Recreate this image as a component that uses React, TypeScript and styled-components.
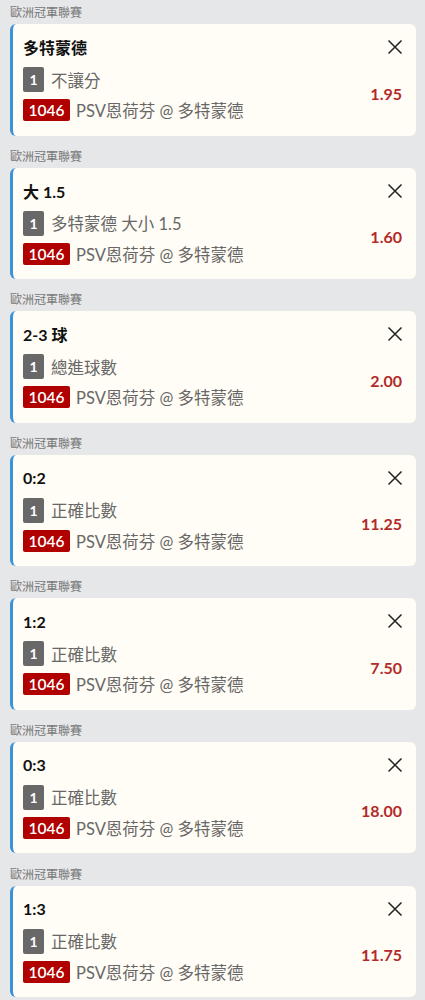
import React from "react";
import styled, { createGlobalStyle } from "styled-components";

const GlobalStyle = createGlobalStyle`
  html, body {
    margin: 0;
    padding: 0;
    background: #e6e7e9;
    font-family: Lato, "Noto Sans CJK TC", sans-serif;
  }
`;

const Page = styled.div`
  display: flex;
  flex-direction: column;
  padding: 0 9px 0 10px;
`;

const Section = styled.section`
  display: flex;
  flex-direction: column;
  height: 143.6px;
`;

const League = styled.div`
  height: 24px;
  display: flex;
  align-items: center;
  padding-bottom: 1px;
  box-sizing: border-box;
  font-size: 12px;
  color: #777;
  font-family: "Noto Sans CJK TC", sans-serif;
`;

const Card = styled.div`
  height: 111.5px;
  box-sizing: border-box;
  background: #fffdf5;
  border-left: 3px solid #3a92db;
  border-radius: 6px;
  padding: 13px 14px 0 10px;
  display: flex;
  flex-direction: column;
`;

const TitleRow = styled.div`
  display: flex;
  align-items: center;
  justify-content: space-between;
  height: 20px;
`;

const Title = styled.div`
  font-size: 16px;
  font-weight: 700;
  color: #111;
  font-family: Lato, "Noto Sans CJK TC", sans-serif;
`;

const CloseButton = styled.button`
  border: 0;
  background: none;
  padding: 0;
  margin-right: -1px;
  width: 16px;
  height: 16px;
  display: flex;
  align-items: center;
  justify-content: center;
  color: #222;
`;

const Body = styled.div`
  display: flex;
  align-items: center;
  margin-top: 10px;
`;

const Lines = styled.div`
  flex: 1;
  display: flex;
  flex-direction: column;
  gap: 6px;
`;

const Line = styled.div<{ $gap: number }>`
  display: flex;
  align-items: center;
  gap: ${(p) => p.$gap}px;
  font-size: 16.5px;
  color: #676767;
  font-family: Lato, "Noto Sans CJK TC", sans-serif;
`;

const Badge = styled.span<{ $kind: "gray" | "red" }>`
  display: inline-flex;
  align-items: center;
  justify-content: center;
  box-sizing: border-box;
  color: #fff;
  border-radius: 2px;
  font-family: Lato, sans-serif;
  background: ${(p) => (p.$kind === "gray" ? "#686868" : "#b10000")};
  width: ${(p) => (p.$kind === "gray" ? "21px" : "47px")};
  height: ${(p) => (p.$kind === "gray" ? "25px" : "22px")};
  font-size: ${(p) => (p.$kind === "gray" ? "14px" : "15.5px")};
  font-weight: ${(p) => (p.$kind === "gray" ? 700 : 600)};
`;

const Odds = styled.div`
  font-size: 16px;
  font-weight: 700;
  color: #b32a2a;
  font-family: Lato, sans-serif;
  margin-top: -3px;
`;

type Bet = { title: string; market: string; odds: string };

const bets: Bet[] = [
  { title: "多特蒙德", market: "不讓分", odds: "1.95" },
  { title: "大 1.5", market: "多特蒙德 大小 1.5", odds: "1.60" },
  { title: "2-3 球", market: "總進球數", odds: "2.00" },
  { title: "0:2", market: "正確比數", odds: "11.25" },
  { title: "1:2", market: "正確比數", odds: "7.50" },
  { title: "0:3", market: "正確比數", odds: "18.00" },
  { title: "1:3", market: "正確比數", odds: "11.75" },
];

const CloseIcon = () => (
  <svg width="16" height="16" viewBox="0 0 16 16" fill="none">
    <path d="M1.5 1.5L14.5 14.5M14.5 1.5L1.5 14.5" stroke="currentColor" strokeWidth="1.5" />
  </svg>
);

export default function App() {
  return (
    <>
      <GlobalStyle />
      <Page>
        {bets.map((b, i) => (
          <Section key={i}>
            <League>歐洲冠軍聯賽</League>
            <Card>
              <TitleRow>
                <Title>{b.title}</Title>
                <CloseButton aria-label="close">
                  <CloseIcon />
                </CloseButton>
              </TitleRow>
              <Body>
                <Lines>
                  <Line $gap={7}>
                    <Badge $kind="gray">1</Badge>
                    <span>{b.market}</span>
                  </Line>
                  <Line $gap={6}>
                    <Badge $kind="red">1046</Badge>
                    <span>PSV恩荷芬 @ 多特蒙德</span>
                  </Line>
                </Lines>
                <Odds>{b.odds}</Odds>
              </Body>
            </Card>
          </Section>
        ))}
      </Page>
    </>
  );
}
